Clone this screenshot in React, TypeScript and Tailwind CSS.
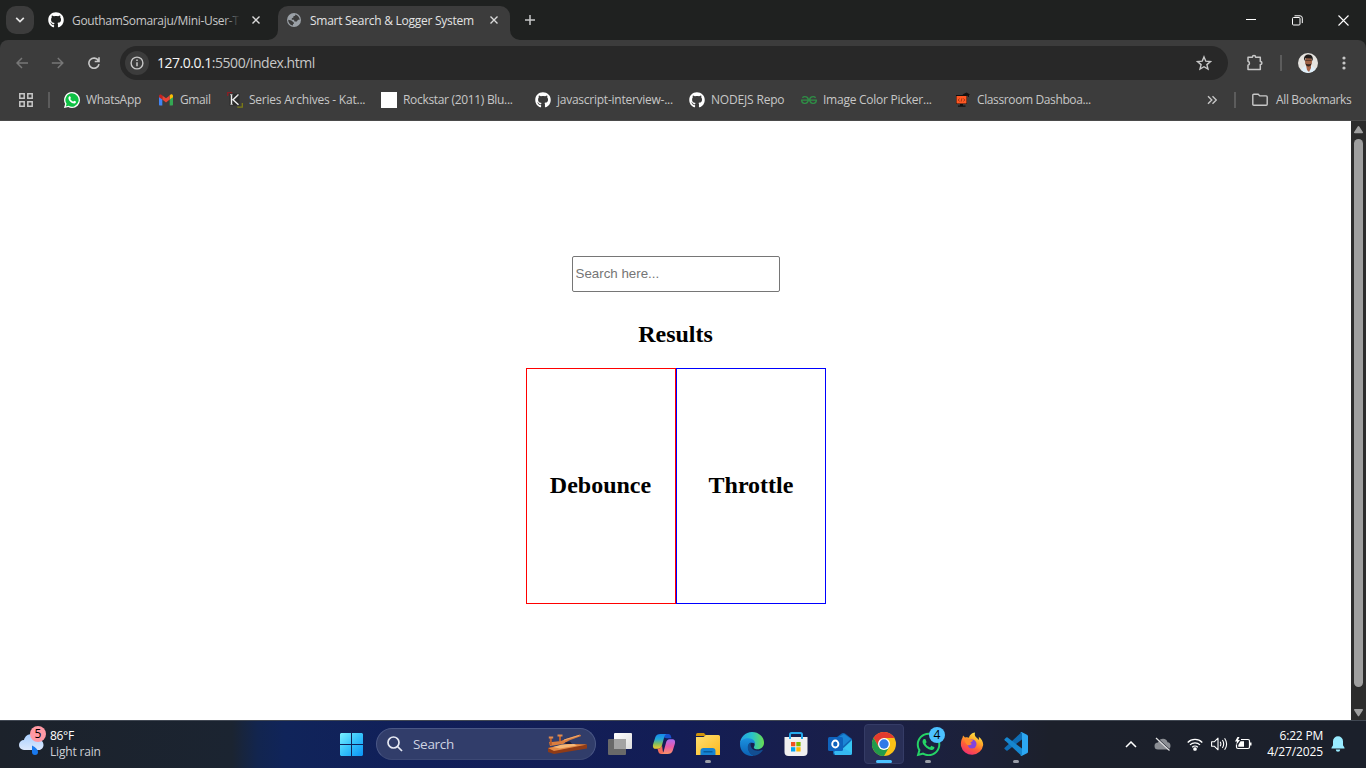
import React from "react";
import { FaGithub, FaWhatsapp } from "react-icons/fa";
import { SiGeeksforgeeks } from "react-icons/si";

const ui = "font-['Open_Sans','Noto_Sans',sans-serif]";

function CloseX() {
  return (
    <svg width="10" height="10" viewBox="0 0 10 10" className="shrink-0" stroke="#dadada" strokeWidth="1.4">
      <path d="M1.5 1.500l7 7M8.500 1.500l-7 7" />
    </svg>
  );
}

function Globe() {
  return (
    <svg width="14" height="14" viewBox="0 0 14 14" className="shrink-0">
      <circle cx="7" cy="7" r="7" fill="#9aa0a6" />
      <path d="M1.200 6.800L4.300 7.400 6.800 9.600V11H6V12.500C3.400 12.300 1.200 9.900 1.200 6.800zM8.200 1.500c2.600.6 4.400 2.700 4.500 5.300H11L9.800 8.500H7.600L6.900 6.800H4.800V5.200l1.600-.8V3.200L8.200 2.800z" fill="#3c3c3c" />
    </svg>
  );
}

function TabStrip() {
  return (
    <div className="flex h-10 items-start bg-[#1f2120] pt-1.5">
      <div className="ml-1.5 flex h-7 w-7 items-center justify-center rounded-[10px] bg-[#3c3c3c]">
        <svg width="10" height="6" viewBox="0 0 10 6" fill="none" stroke="#e3e3e3" strokeWidth="1.7">
          <path d="M1.200.8L5 4.600 8.800.8" />
        </svg>
      </div>
      <div className="flex h-7 w-[244px] items-center pl-3.5">
        <FaGithub className="h-4 w-4 shrink-0 text-white" />
        <div className="relative ml-2 w-[168px] whitespace-nowrap pt-px text-[12px] leading-7 tracking-[-0.32px] text-[#c7c7c7]">
          GouthamSomaraju/Mini-User-T
          <div className="absolute inset-y-0 right-0 w-4 bg-gradient-to-r from-transparent to-[#1f2120]" />
        </div>
        <div className="ml-[11px] flex"><CloseX /></div>
      </div>
      <div className="relative flex h-[34px] w-[232px] rounded-t-[10px] bg-[#3c3c3c]">
        <svg className="absolute -left-2.5 bottom-0" width="10" height="10"><path d="M10 0v10H0A10 10 0 0 0 10 0z" fill="#3c3c3c" /></svg>
        <svg className="absolute -right-2.5 bottom-0" width="10" height="10"><path d="M0 0v10h10A10 10 0 0 1 0 0z" fill="#3c3c3c" /></svg>
        <div className="flex h-7 items-center pl-[9px]">
          <Globe />
          <div className="ml-[9px] w-[168px] whitespace-nowrap pt-px text-[12px] leading-7 tracking-[-0.27px] text-[#e3e3e3]">Smart Search &amp; Logger System</div>
          <div className="ml-[11px] flex"><CloseX /></div>
        </div>
      </div>
      <svg className="ml-[14px] mt-2" width="12" height="12" stroke="#c7c7c7" strokeWidth="1.5"><path d="M6 1v10M1 6h10" /></svg>
      <div className="ml-auto flex h-7 items-center">
        <div className="flex w-[46px] justify-center"><svg width="10" height="10" shapeRendering="crispEdges"><path d="M0 4h10v1H0z" fill="#fff" /></svg></div>
        <div className="flex w-[46px] justify-center">
          <svg width="11" height="11" fill="none" stroke="#fff"><rect x=".5" y="2.500" width="7.500" height="7.500" rx="1" /><path d="M2.500.8h5.500a2.300 2.300 0 0 1 2.300 2.300v5" /></svg>
        </div>
        <div className="flex w-[46px] justify-center"><svg width="11" height="11" stroke="#fff" strokeWidth="1.1"><path d="M.5.5l10 10M10.500.5l-10 10" /></svg></div>
      </div>
    </div>
  );
}

function AddressRow() {
  return (
    <div className="flex h-[34px] items-center">
      <svg className="ml-4" width="13" height="12" fill="none" stroke="#777" strokeWidth="1.500"><path d="M12 6H1M6 1L1 6l5 5" /></svg>
      <svg className="ml-[22px]" width="13" height="12" fill="none" stroke="#777" strokeWidth="1.500"><path d="M.8 6h11M6.800 1l5 5-5 5" /></svg>
      <svg className="ml-6" width="12" height="12" fill="none" stroke="#c7c7c7" strokeWidth="1.600"><path d="M10.300 3.500A5.100 5.100 0 1 0 11 7.200M11 .2v4.300H6.700" /></svg>
      <div className="ml-5 flex h-[34px] w-[1108px] items-center rounded-full bg-[#282828]">
        <div className="ml-[5px] flex h-6 w-6 items-center justify-center rounded-full bg-[#3c3c3c]">
          <svg width="14" height="14" fill="none" stroke="#c7c7c7" strokeWidth="1.400"><circle cx="7" cy="7" r="5.900" /><path d="M7 6.200v4M7 3.600v1.500" strokeWidth="1.500" /></svg>
        </div>
        <div className="ml-2 whitespace-nowrap text-[14px] leading-[34px] tracking-[-0.47px] text-[#c7c7c7]"><span className="text-[#f5f5f5]">127.0.0.1</span>:5500/index.html</div>
        <svg className="ml-auto mr-4" width="16" height="16" viewBox="0 0 16 16" fill="none" stroke="#c7c7c7" strokeWidth="1.400"><path d="M8 1.900l1.800 4.300 4.600.4-3.500 3 1.100 4.500L8 11.700l-4 2.400 1.100-4.500-3.500-3 4.600-.4z" /></svg>
      </div>
      <svg className="ml-[18px]" width="18" height="18" fill="none" stroke="#c7c7c7" strokeWidth="1.500"><path d="M2 3.200h4.400a1.600 1.600 0 0 1 3.200 0h4.700v4.200a1.600 1.600 0 0 1 0 3.200v4.900H2v-4.200a2.100 2.100 0 0 0 0-4z" strokeLinejoin="round" /></svg>
      <div className="ml-4 h-4 w-0.5 bg-[#5c5c5c]" />
      <svg className="ml-4" width="20" height="20" viewBox="0 0 20 20">
        <defs><clipPath id="face"><circle cx="10" cy="10" r="10" /></clipPath></defs>
        <g clipPath="url(#face)">
          <rect width="20" height="20" fill="#e5e3df" />
          <path d="M3 20c0-5 2-6 4.500-7h6c3 1 4.500 3 4.500 7z" fill="#dfeffa" />
          <path d="M8 12h5v3L11 19l-2-2z" fill="#a86548" />
          <ellipse cx="10.500" cy="8.500" rx="3.500" ry="5" fill="#9f6347" />
          <path d="M6.300 8C5 3 8 1.500 10.700 1.500c3.500 0 4.800 3 3.800 6.500l-1.200-2.500-6-.3z" fill="#211b19" />
          <path d="M7.200 7.300h6.600" stroke="#4a2d22" strokeWidth=".9" />
          <path d="M7.400 10.300c.6 2.200 1.600 3.200 3.100 3.200s2.500-1 3.100-3.200c-1 1.300-5 1.300-6.200 0z" fill="#33231d" />
        </g>
      </svg>
      <svg className="ml-6" width="4" height="16" fill="#c7c7c7"><circle cx="2" cy="3" r="1.600" /><circle cx="2" cy="8" r="1.600" /><circle cx="2" cy="13" r="1.600" /></svg>
    </div>
  );
}

const WhatsAppBadge = () => (
  <svg width="16" height="16" viewBox="0 0 16 16">
    <path d="M8 0a8 8 0 0 1 0 16 8 8 0 0 1-3.800-1L0 16l1.100-4A8 8 0 0 1 8 0z" fill="#fff" />
    <path d="M8 1.300a6.700 6.700 0 1 1-3.400 12.500L1.800 14.500l.8-2.700A6.700 6.700 0 0 1 8 1.300z" fill="#0fc144" />
    <path d="M5.300 4.300c.6-.3.900-.1 1.100.4l.5 1.200c0 .4-.6.800-.6 1 .7 1.300 1.600 2.100 2.900 2.600.4 0 .8-.9 1.100-.8l1.600.8c.2.400-.1 1.500-.8 1.800-1.300.7-3.600-.2-5-1.700C4.600 8 3.600 5.800 5.300 4.300z" fill="#fff" />
  </svg>
);
const GmailIcon = () => (
  <svg width="16" height="16" viewBox="0 0 16 16">
    <path d="M1 4v8.500c0 .6.400 1 1 1h2.300V6.800z" fill="#4285f4" />
    <path d="M15 4v8.500c0 .6-.4 1-1 1h-2.300V6.800z" fill="#34a853" />
    <path d="M11.700 3.600v4L15 5.200V4c0-1.600-1.600-2.100-2.600-1.300z" fill="#fbbc04" />
    <path d="M4.300 7.600V3.500L8 6.300l3.700-2.800v4.100L8 10.400z" fill="#ea4335" />
    <path d="M1 4v1.200l3.300 2.400v-4l-.7-.7C2.500 2 1 2.600 1 4z" fill="#c5221f" />
  </svg>
);
const KatIcon = () => (
  <svg width="16" height="16" viewBox="0 0 16 16" fill="none">
    <path d="M2.500 1.500h10v12h-10z" fill="#2b2b2b" />
    <path d="M.7 4V.7h4.500" stroke="#8c1e24" strokeWidth="1.300" />
    <path d="M15.300 11v4.200h-5" stroke="#7c7c15" strokeWidth="1.300" />
    <path d="M4.500 2.500v10M11 3L6 7.800l5.500 5" stroke="#eee" strokeWidth="1.400" />
    <path d="M3 2.600h2.500M3.500 12.500h2.200M10 2.800h2" stroke="#aaa" />
  </svg>
);
const ClassroomIcon = () => (
  <svg width="16" height="16" viewBox="0 0 16 16">
    <path d="M1 3h11v9H1zM5 12h3v2H5zM3 13.500h7.500v1.300H3zM7.500 2.500L11.500.5l3.500 2-3.500 2z" fill="#111" />
    <path d="M13.500 2v3" stroke="#111" />
    <rect x="1.500" y="4" width="10" height="7.500" fill="#ff5722" />
    <path d="M4.500 6.500L3.200 8l1.300 1.500M8.500 6.500L9.800 8 8.500 9.500M6.900 6.300l-.8 3.400" stroke="#7a2a10" fill="none" strokeWidth=".7" />
  </svg>
);

const bookmarks: { label: string; icon: React.ReactNode; box: string; text: string }[] = [
  { label: "WhatsApp", icon: <WhatsAppBadge />, box: "w-[94px]", text: "tracking-[-0.3px]" },
  { label: "Gmail", icon: <GmailIcon />, box: "w-[69px]", text: "tracking-[-0.4px]" },
  { label: "Series Archives - Kat...", icon: <KatIcon />, box: "w-[154px]", text: "tracking-[-0.23px]" },
  { label: "Rockstar (2011) Blu...", icon: <div className="h-4 w-4 bg-white" />, box: "w-[154px]", text: "tracking-[-0.32px]" },
  { label: "javascript-interview-...", icon: <FaGithub className="h-4 w-4 text-white" />, box: "w-[154px]", text: "tracking-[-0.25px]" },
  { label: "NODEJS Repo", icon: <FaGithub className="h-4 w-4 text-white" />, box: "w-[112px]", text: "tracking-[-0.18px]" },
  { label: "Image Color Picker...", icon: <SiGeeksforgeeks className="h-4 w-4 text-[#2f8d46]" />, box: "w-[154px]", text: "tracking-[-0.25px]" },
  { label: "Classroom Dashboa...", icon: <ClassroomIcon />, box: "w-[154px]", text: "tracking-[-0.38px]" },
];

function BookmarksRow() {
  return (
    <div className="flex h-10 items-center text-[12px] text-[#c7c7c7]">
      <svg className="ml-[19px]" width="14" height="14" fill="none" stroke="#c7c7c7" strokeWidth="1.500">
        <path d="M.8.8h4.400v4.400H.8zM8.800.8h4.400v4.400H8.800zM.8 8.800h4.400v4.400H.8zM8.800 8.800h4.400v4.400H8.800z" />
      </svg>
      <div className="ml-[15px] mr-3.5 h-4 w-0.5 bg-[#5c5c5c]" />
      {bookmarks.map((b) => (
        <div key={b.label} className={`flex shrink-0 items-center gap-1.5 whitespace-nowrap ${b.box} ${b.text}`}>
          <div className="shrink-0">{b.icon}</div>
          <span>{b.label}</span>
        </div>
      ))}
      <svg className="ml-auto" width="10" height="10" fill="none" stroke="#c7c7c7" strokeWidth="1.400"><path d="M1 1.200L4.800 5 1 8.800M5.500 1.200L9.300 5 5.500 8.800" /></svg>
      <div className="ml-[17px] h-4 w-0.5 bg-[#5c5c5c]" />
      <svg className="ml-4" width="16" height="14" fill="none" stroke="#c7c7c7" strokeWidth="1.400"><path d="M.8 2.200c0-.6.400-1 1-1h4.400l1.600 1.700h6.400c.6 0 1 .4 1 1v7.300c0 .6-.4 1-1 1H1.800c-.6 0-1-.4-1-1z" /></svg>
      <span className="ml-2 w-[90px] whitespace-nowrap tracking-[-0.36px]">All Bookmarks</span>
    </div>
  );
}

function PageView() {
  return (
    <div className="flex h-[599px]">
      <main className="flex flex-1 flex-col items-center bg-white pt-[135px] font-['Liberation_Serif',serif] text-2xl font-bold leading-[27px] text-black">
        <input
          placeholder="Search here..."
          className="h-9 w-[208px] rounded-[2px] border border-[#767676] bg-white pb-0.5 pl-[3px] pr-0.5 font-['Liberation_Sans',sans-serif] text-[13.333px] font-normal leading-4 placeholder:text-[#757575]"
        />
        <h2 className="mt-[29px]">Results</h2>
        <div className="mt-5 flex">
          <div className="flex h-[236px] w-[150px] items-center justify-center border border-[#ff0000] pb-0.5"><h2>Debounce</h2></div>
          <div className="flex h-[236px] w-[150px] items-center justify-center border border-[#0000ff] pb-0.5 pl-px"><h2>Throttle</h2></div>
        </div>
      </main>
      <div className="flex w-[15px] flex-col items-center bg-[#2c2c2c]">
        <svg className="mt-[5px]" width="9" height="8" fill="#9f9f9f"><path d="M4.500 0q.5 0 .8.5L9 6.300q.2.9-.8.900H.8Q-.2 7.200 0 6.300L3.700.5q.3-.5.8-.5z" /></svg>
        <div className="mt-[5px] h-[548px] w-[9px] rounded-full bg-[#9f9f9f]" />
        <svg className="mt-[22px]" width="9" height="8" fill="#9f9f9f"><path d="M4.500 7.200q.5 0 .8-.5L9 .900Q9.200 0 8.200 0H.8Q-.2 0 0 .900l3.700 5.800q.3.500.8.500z" /></svg>
      </div>
    </div>
  );
}

const StartIcon = () => (
  <svg width="23" height="23" viewBox="0 0 23 23">
    <defs><linearGradient id="win" gradientUnits="userSpaceOnUse" x1="0" y1="0" x2="23" y2="23"><stop stopColor="#7af0ff" /><stop offset=".5" stopColor="#35c2fb" /><stop offset="1" stopColor="#0a93f5" /></linearGradient></defs>
    <path d="M1 0h10v11H0V1zM12 0h10l1 1v10H12zM0 12h11v11H1l-1-1zM12 12h11v10l-1 1H12z" fill="url(#win)" />
  </svg>
);
const TaskView = () => (
  <svg width="24" height="24" viewBox="0 0 24 24">
    <defs><linearGradient id="tv" x1="0" y1="0" x2="1" y2="1"><stop stopColor="#fff" /><stop offset="1" stopColor="#dcdcdc" /></linearGradient></defs>
    <rect x="6" y="1" width="18" height="16" rx="1" fill="url(#tv)" />
    <rect x="0" y="7" width="18" height="16" rx="1" fill="#696969" />
    <path d="M6 7h12v10H6z" fill="#a3a3a3" />
  </svg>
);
const Copilot = () => (
  <svg width="24" height="24" viewBox="0 0 24 24">
    <defs>
      <linearGradient id="cpa" x1="0" y1="0" x2="0" y2="1"><stop stopColor="#1687ed" /><stop offset=".35" stopColor="#22a8d8" /><stop offset=".65" stopColor="#7fbd60" /><stop offset="1" stopColor="#f5c929" /></linearGradient>
      <linearGradient id="cpb" x1="0" y1="0" x2="0" y2="1"><stop stopColor="#a96df2" /><stop offset=".5" stopColor="#e85aa9" /><stop offset="1" stopColor="#fb9268" /></linearGradient>
    </defs>
    <path d="M12 2h4.500c1.300 0 2 1 2.400 2.200l.6 2h-5l-3.300-1z" fill="#1751cf" />
    <path d="M8.500 2h6c-1.200.4-1.800 1.400-2.200 2.800L10 13.200c-.6 2.200-1.500 3.600-3.800 3.600H3.700C1 16.800.5 14.500 1.200 12L3.400 5C4.200 2.900 5.700 2 8.500 2z" fill="url(#cpa)" />
    <path d="M5.500 16.800c2.600 0 3.700-1.100 4.500-3.600l.8 5.800c.4 2 1 3 2.700 3H9.300c-2 0-2.500-1-3-2.500z" fill="#f36d5c" />
    <path d="M15.500 22h-6c1.200-.4 1.800-1.400 2.200-2.800l2.300-8.400c.6-2.200 1.500-3.600 3.800-3.600h2.500c2.700 0 3.200 2.300 2.500 4.800L20.600 19c-.8 2.100-2.300 3-5.100 3z" fill="url(#cpb)" />
  </svg>
);
const Explorer = () => (
  <svg width="24" height="24" viewBox="0 0 24 24">
    <defs><linearGradient id="fold" x1="0" y1="0" x2="1" y2="1"><stop stopColor="#ffdf71" /><stop offset="1" stopColor="#fbb91f" /></linearGradient></defs>
    <path d="M0 2.500Q0 1 1.500 1H8l2.500 3H0z" fill="#cf920a" />
    <path d="M0 5h7.500L10 3h12.500Q24 3 24 4.500V23H0z" fill="url(#fold)" />
    <path d="M4.500 23v-4q0-3 3-3h9q3 0 3 3v4z" fill="#1683d3" /><path d="M7.500 19h9v1.500h-9z" fill="#075c9d" />
  </svg>
);
const Edge = () => (
  <svg width="24" height="24" viewBox="0 0 24 24">
    <defs>
      <linearGradient id="eg1" x1="0" y1=".3" x2="1" y2=".3"><stop stopColor="#249fe3" /><stop offset=".5" stopColor="#28c2cb" /><stop offset="1" stopColor="#68dd50" /></linearGradient>
      <linearGradient id="eg2" x1="0" y1="0" x2="0" y2="1"><stop stopColor="#1b91df" /><stop offset="1" stopColor="#0b61b4" /></linearGradient>
    </defs>
    <path d="M0 12C0 5 5.500 0 12 0c7 0 12 5 12 10.700 0 4-3 6.500-6.500 6.500-3.500 0-4.300-1.500-3.200-3 1-1.500.7-6.200-5.300-6.200C3.500 8 0 10 0 12z" fill="url(#eg1)" />
    <path d="M0 12C0 9 3.400 6.300 8.400 6.300c4.300 0 6.700 2.800 6.700 5.200-5-2.500-7 .9-7 3.500 0 4.500 3.500 8.300 6.300 8.700C6 25.200 0 19.500 0 12z" fill="url(#eg2)" />
    <path d="M10.800 10.300C5.800 12 7 22 14.300 23.700c3.600-.4 7-3 8.400-5.400.3-.6-.2-.8-.7-.5C16 20.700 9 17 10.800 10.300z" fill="#124e92" />
  </svg>
);
const Store = () => (
  <svg width="24" height="24" viewBox="0 0 24 24">
    <path d="M6 6V2.500Q6 1 7.500 1h9Q18 1 18 2.500V6" fill="none" stroke="#24a9ed" strokeWidth="2" />
    <path d="M.5 5h23v15q0 4-4 4h-15q-4 0-4-4z" fill="#f0f0f0" />
    <path d="M5 3.500V7h2V3.500M17 3.500V7h2V3.500" fill="#24a9ed" />
    <path d="M7 10h4.300v4.300H7z" fill="#f25022" /><path d="M12.300 10h4.300v4.300h-4.300z" fill="#7fba00" /><path d="M7 15.200h4.300v4.300H7z" fill="#00a4ef" /><path d="M12.300 15.200h4.300v4.300h-4.300z" fill="#ffb900" />
  </svg>
);
const Outlook = () => (
  <svg width="24" height="24" viewBox="0 0 24 24">
    <path d="M5 8L14 1.300Q15.500.600 17 1.500L24 7v14q0 2-2 2H7q-2 0-2-2z" fill="#1066b5" />
    <path d="M9 6l7-4 7 5-9 8z" fill="#1b86d6" />
    <path d="M24 8v13q0 2-2 2H8z" fill="#37c6f3" /><path d="M12 14l12 7q-.4 2-2 2H7l-1-3z" fill="#35b8f1" />
    <rect x="0" y="5" width="15" height="14" rx="1.500" fill="#0f63bd" />
    <ellipse cx="7.300" cy="12" rx="3.100" ry="3.500" fill="none" stroke="#fff" strokeWidth="1.900" />
  </svg>
);
const Chrome = () => (
  <svg width="24" height="24" viewBox="0 0 24 24">
    <circle cx="12" cy="12" r="12" fill="#fbc116" />
    <path d="M1.600 6A12 12 0 0 1 22.400 6H12L6.800 15z" fill="#e33b2e" />
    <path d="M1.600 6A12 12 0 0 0 12 24l5.200-9-5.200 3-5.200-3z" fill="#229a4b" />
    <circle cx="12" cy="12" r="6" fill="#fff" /><circle cx="12" cy="12" r="4.700" fill="#3079e8" />
  </svg>
);
const Firefox = () => (
  <svg width="24" height="24" viewBox="0 0 24 24">
    <defs><linearGradient id="ff" x1=".8" y1="0" x2=".3" y2="1"><stop stopColor="#fff34d" /><stop offset=".35" stopColor="#ffae29" /><stop offset=".65" stopColor="#ff6036" /><stop offset="1" stopColor="#f12c74" /></linearGradient></defs>
    <path d="M15 .5c-.7 3 .2 4 2 5.500.8.6 1.300 1.300 1.500 2 .6-1 .5-2.300.2-3.300 3 2 4.500 5 4.500 8.300A11.300 11.300 0 0 1 1 14c-.4-3.700.4-6.700 1.600-8.500L3 3.500l2 2c2-.5 3-.3 4 .3C9.500 3 12 .7 15 .5z" fill="url(#ff)" />
    <circle cx="12" cy="12" r="4.500" fill="#8344dc" />
    <path d="M4.500 8c2-2 4-1.600 6-.3l2.600.8c-.5 1.300-2.600 1.100-2.800 2.600.5.6 1 .8 1.700.7-1 1.200-2.800 1.500-4.400 1.500C6 12 5 10 4.500 8z" fill="#ff8b2b" />
  </svg>
);
const VSCode = () => (
  <svg width="24" height="24" viewBox="0 0 24 24">
    <path d="M17.500.2L.7 15.700q-.7.700 0 1.400l1.600 1.400q.6.500 1.300 0L22.500 4z" fill="#0e6db5" />
    <path d="M17.500 23.800L.7 8.300Q0 7.600.7 6.900l1.600-1.400q.6-.5 1.300 0L22.500 20z" fill="#1687d0" />
    <path d="M17.500.1L23 2.700q1 .5 1 1.600v15.400q0 1.100-1 1.600l-5.500 2.600q-1 .3-1.500-.6 1.500.6 2-.8v-21q-.5-1.400-2-.8.500-.8 1.500-.6z" fill="#2ca7f2" />
  </svg>
);

const apps: { name: string; icon: React.ReactNode; dot?: string; active?: boolean; badge?: string }[] = [
  { name: "view", icon: <TaskView /> },
  { name: "copilot", icon: <Copilot /> },
  { name: "explorer", icon: <Explorer />, dot: "w-1.5 bg-[#9a9ea8]" },
  { name: "edge", icon: <Edge /> },
  { name: "store", icon: <Store /> },
  { name: "outlook", icon: <Outlook /> },
  { name: "chrome", icon: <Chrome />, dot: "w-4 bg-[#4cc2ff]", active: true },
  { name: "whatsapp", icon: <FaWhatsapp className="h-[27px] w-[27px] text-[#25d366]" />, dot: "w-1.5 bg-[#9a9ea8]", badge: "4" },
  { name: "firefox", icon: <Firefox /> },
  { name: "vscode", icon: <VSCode />, dot: "w-1.5 bg-[#9a9ea8]" },
];

function Plane() {
  return (
    <svg width="42" height="22" viewBox="0 0 42 22" className="shrink-0">
      <path d="M1 15l20-4 19 .5v4L7 21l-6-2z" fill="#8f3b17" />
      <path d="M1 15l20-4 19 .5L7 18z" fill="#e48a46" />
      <path d="M6 14l9-2.500 12-.5 3 1.500-17 3z" fill="#f5b878" />
      <path d="M2 9h3l9-1 6-2.500L33 1.500l1.200 1.400L22 7.500l-6 3.500-13 2z" fill="#d97d3e" />
      <path d="M17 7l15-4.500" stroke="#f3b47a" strokeWidth=".8" />
      <path d="M3.800 4.500v7.500M13 2.500V8" stroke="#b95c2a" strokeWidth="2" />
      <path d="M1.800 4.500h4.400M10.500 2.500h5" stroke="#dd8a50" strokeWidth="2.200" />
      <path d="M18 9.500l5-1 2 2.500h-6z" fill="#1b1c3a" />
    </svg>
  );
}

function Taskbar() {
  return (
    <div className="flex h-12 items-center border-t border-[#414853] bg-[linear-gradient(90deg,#1c222b_0px,#1b2431_232px,#12254f_258px,#10245a_285px,#111f59_420px,#131d55_680px,#1a1f48_860px,#1c2138_980px,#1c202b_1050px,#1b202b_1366px)] pb-px">
      <div className="flex w-[329px] items-center">
        <div className="relative ml-[19px] h-9 w-[25px]">
          <svg className="mt-[5px]" width="26" height="30" viewBox="0 0 26 30">
            <defs><linearGradient id="cloud" x1="0" y1="0" x2="0" y2="1"><stop stopColor="#a8cfff" /><stop offset="1" stopColor="#dce8fc" /></linearGradient></defs>
            <path d="M5 19a5 5 0 0 1 0-10C6 5 9 3 13 3c5 0 7 3 7 6 3 0 4.500 2.500 4.500 5s-2 5-4.500 5z" fill="url(#cloud)" />
            <path d="M13 14.500q6 3 6 6.500a3 3 0 0 1-6 0z" fill="#1979ee" />
          </svg>
          <div className="absolute left-[11px] top-0 flex h-4 w-4 items-center justify-center rounded-full bg-[#ff99a4] text-[12px] leading-4 text-black">5</div>
        </div>
        <div className="ml-1.5 whitespace-nowrap text-[12px] leading-4 text-white">
          <div className="tracking-[-0.3px]">86°F</div>
          <div className="tracking-[-0.18px] text-[#ccd0d6]">Light rain</div>
        </div>
      </div>
      <div className="flex w-[47px] pl-[11px]"><StartIcon /></div>
      <div className="mr-0.5 flex h-8 w-[220px] items-center rounded-full border border-[#4a5785] border-b-[#3c4874] bg-[#313d6a] pl-2.5">
        <svg width="16" height="16" fill="none" stroke="#e6e9f3" strokeWidth="1.700"><circle cx="6.500" cy="6.500" r="5.500" /><path d="M10.500 10.500L15 15" /></svg>
        <span className="ml-2.5 w-[134px] text-[13.500px] tracking-[-0.3px] text-[#ced3e2]">Search</span>
        <Plane />
      </div>
      {apps.map((a) => (
        <div key={a.name} className="flex w-11 justify-center">
          <div className={a.active ? "relative flex h-10 w-10 items-center justify-center rounded border border-[#353c66] bg-[#292f57]" : "relative flex h-10 w-10 items-center justify-center"}>
            {a.icon}
            {a.dot && <div className={a.active ? "absolute inset-x-0 bottom-0 flex justify-center" : "absolute inset-x-0 bottom-px flex justify-center"}><div className={`h-[3px] rounded-full ${a.dot}`} /></div>}
            {a.badge && <div className="absolute right-[3px] top-[3px] flex h-4 w-4 items-center justify-center rounded-full bg-[#4cc2ff] text-[12px] leading-4 text-black">{a.badge}</div>}
          </div>
        </div>
      ))}
      <div className="ml-auto flex items-center">
        <svg width="12" height="7" fill="none" stroke="#fff" strokeWidth="1.500"><path d="M1 6l5-5 5 5" /></svg>
        <svg className="ml-[17px]" width="17" height="14" viewBox="0 0 17 14"><path d="M4 12.500a3.500 3.500 0 0 1 0-7C5 2.800 7 1.800 9 1.800c2.500 0 4 1.500 4.500 3.500 2 0 3 1.700 3 3.700s-1.500 3.500-3 3.500z" fill="#8b8e94" /><path d="M3 1.300l13 12" stroke="#1c202b" strokeWidth="1.500" /><path d="M2 1l13.500 12.500" stroke="#e4e4e6" strokeWidth="1.200" /></svg>
        <svg className="ml-4" width="16" height="14" viewBox="0 0 16 14" fill="none" stroke="#fff" strokeWidth="1.300"><path d="M.7 5.500a10.300 10.300 0 0 1 14.600 0M3 7.900a7 7 0 0 1 10 0M5.200 10.200a4 4 0 0 1 5.600 0" /><circle cx="8" cy="12" r="1.200" fill="#fff" /></svg>
        <svg className="ml-2" width="17" height="14" viewBox="0 0 17 14" fill="none" stroke="#fff" strokeWidth="1.100"><path d="M.6 4.800h2.600L7 1.200v11.600L3.200 9.200H.6z" strokeLinejoin="round" /><path d="M9.200 4.800q1.300 2.200 0 4.400M11.400 3q2.600 4 0 8M13.600 1.200q4 5.800 0 11.600" /></svg>
        <svg className="ml-[7px]" width="17" height="14" viewBox="0 0 17 14"><path d="M6 2.500h7q1.500 0 1.500 1.500v6q0 1.500-1.500 1.500H3Q1.500 11.500 1.500 10V7.500" fill="none" stroke="#fff" strokeWidth="1.200" /><path d="M5.500 4.300H9v5.500H3.300V8zM15 5.500h1.500v3H15zM2.500 0L0 4.500h2L1.200 8 5 3H3L4.500 0z" fill="#fff" /></svg>
        <div className="ml-3 flex w-[59px] flex-col items-end whitespace-nowrap text-[12px] leading-4 text-white">
          <div className="tracking-[-0.2px]">6:22 PM</div>
          <div className="tracking-[-0.12px]">4/27/2025</div>
        </div>
        <svg className="ml-2 mr-[21px]" width="14" height="16" viewBox="0 0 14 16" fill="#99ebff"><path d="M7 .3a5 5 0 0 1 5 5v4l1.500 2.400v.8H.5v-.8L2 9.300v-4a5 5 0 0 1 5-5zM4.800 13.500h4.400a2.200 2.200 0 0 1-4.400 0z" /></svg>
      </div>
    </div>
  );
}

export default function App() {
  return (
    <div className={`flex h-[768px] w-[1366px] flex-col overflow-hidden ${ui}`}>
      <div className="bg-[#1f2120]">
        <TabStrip />
        <div className="h-[81px] rounded-t-[8px] border-b border-[#4a4a4a] bg-[#3c3c3c] pt-1.5">
          <AddressRow />
          <BookmarksRow />
        </div>
      </div>
      <PageView />
      <Taskbar />
    </div>
  );
}
